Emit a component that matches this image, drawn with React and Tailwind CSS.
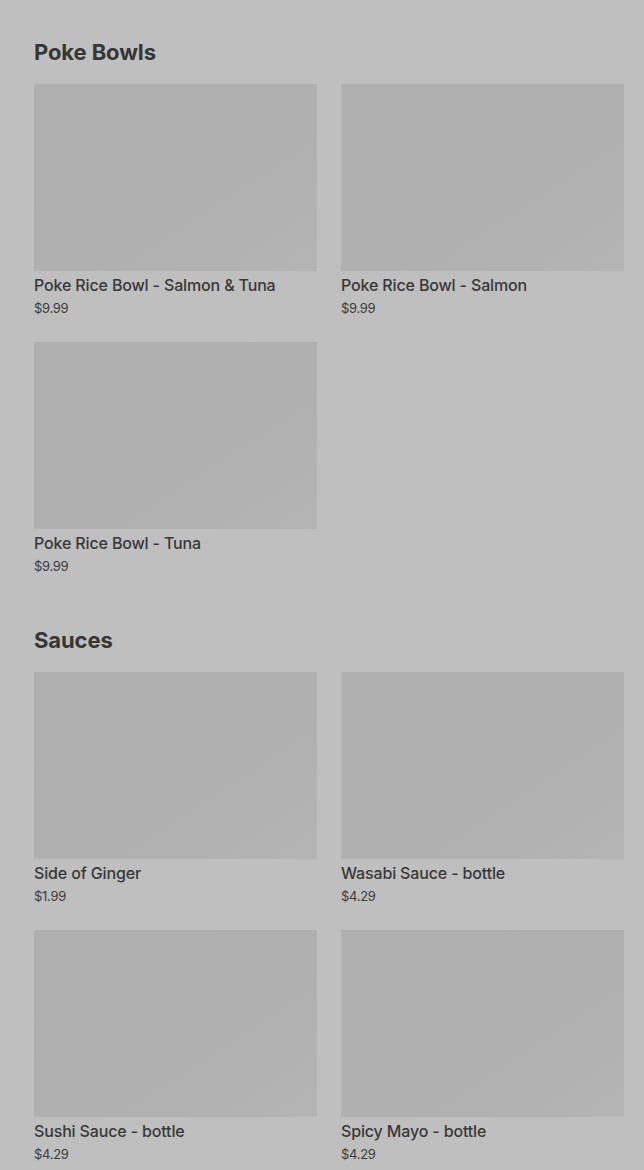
import React from 'react';

const sections = [
  {
    title: 'Poke Bowls',
    items: [
      { name: 'Poke Rice Bowl - Salmon & Tuna', price: '$9.99' },
      { name: 'Poke Rice Bowl - Salmon', price: '$9.99' },
      { name: 'Poke Rice Bowl - Tuna', price: '$9.99' },
    ],
  },
  {
    title: 'Sauces',
    items: [
      { name: 'Side of Ginger', price: '$1.99' },
      { name: 'Wasabi Sauce - bottle', price: '$4.29' },
      { name: 'Sushi Sauce - bottle', price: '$4.29' },
      { name: 'Spicy Mayo - bottle', price: '$4.29' },
    ],
  },
];

const MenuItem = ({ name, price }) => (
  <div className="flex flex-col">
    <div className="h-[187px] w-full bg-gradient-to-br from-[#b0b0b0] from-60% to-[#b4b4b4]" />
    <p className="mt-[2px] text-[16px] leading-6 font-medium tracking-[-0.15px] text-[#383838]">{name}</p>
    <p className="mt-[1px] text-[13px] leading-5 text-[#3c3c3c] tracking-[-0.3px]">{price}</p>
  </div>
);

export default function App() {
  return (
    <div
      className="min-h-screen bg-[#bfbfbf] pl-[34px] pr-[20px] pt-[38px]"
      style={{ fontFamily: 'Inter, "Liberation Sans", sans-serif' }}
    >
      {sections.map((section) => (
        <section key={section.title} className="mb-[50px]">
          <h2 className="text-[22px] leading-7 font-bold tracking-[-0.1px] text-[#363636] mb-[18px]">
            {section.title}
          </h2>
          <div className="grid grid-cols-2 gap-x-[24px] gap-y-[24px]">
            {section.items.map((item) => (
              <MenuItem key={item.name} {...item} />
            ))}
          </div>
        </section>
      ))}
    </div>
  );
}
